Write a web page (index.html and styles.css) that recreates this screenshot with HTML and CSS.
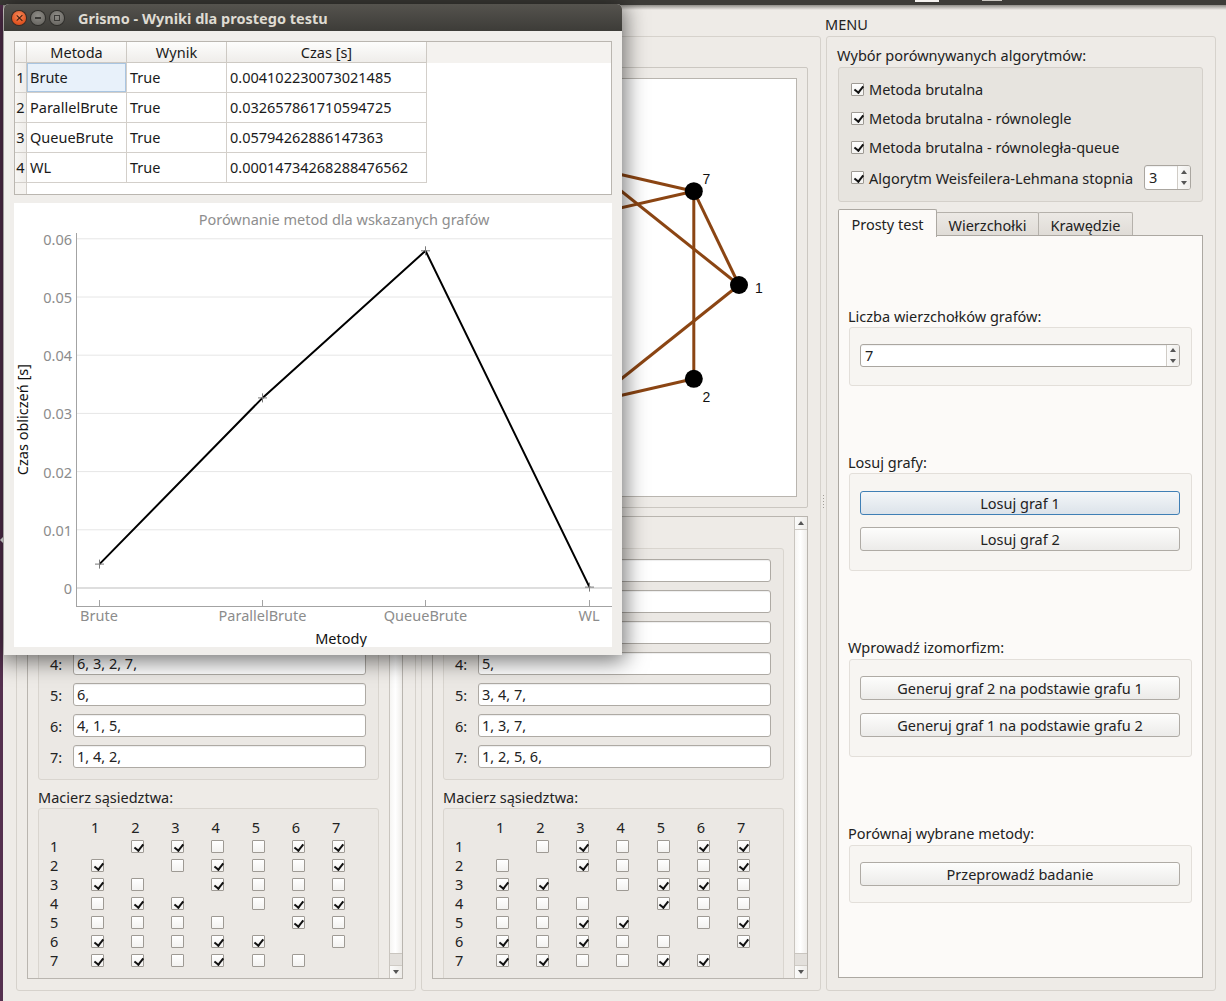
FILE: index.html
```html
<!DOCTYPE html>
<html lang="pl">
<head>
<meta charset="utf-8">
<title>Grismo</title>
<link rel="stylesheet" href="styles.css">
</head>
<body>
<div class="screen">
  <div class="topbar"><span class="tb-icon1"></span><span class="tb-icon2"></span></div>
  <div class="desk">
    <div class="launcher"><span class="launch-arrow"></span></div>
    <div class="mainwin">

      <!-- GRAF 1 (mostly covered by the dialog) -->
      <section class="col col-graph">
        <div class="col-title"></div>
        <div class="col-box">
          <div class="canvas-frame">
            <div class="canvas">
              <svg class="graph" width="352" height="417" viewBox="0 0 352 417">
                <g class="edges">
                  <line x1="295" y1="206" x2="249.8" y2="299.8"/>
                  <line x1="295" y1="206" x2="148.3" y2="323"/>
                  <line x1="295" y1="206" x2="148.3" y2="89"/>
                  <line x1="295" y1="206" x2="249.8" y2="112.2"/>
                  <line x1="249.8" y1="299.8" x2="66.9" y2="258.1"/>
                  <line x1="249.8" y1="299.8" x2="249.8" y2="112.2"/>
                  <line x1="148.3" y1="323" x2="66.9" y2="258.1"/>
                  <line x1="66.9" y1="258.1" x2="148.3" y2="89"/>
                  <line x1="66.9" y1="258.1" x2="249.8" y2="112.2"/>
                  <line x1="66.9" y1="153.9" x2="148.3" y2="89"/>
                </g>
                <g class="nodes">
                  <circle cx="295" cy="206" r="9"/><circle cx="249.8" cy="299.8" r="9"/>
                  <circle cx="148.3" cy="323" r="9"/><circle cx="66.9" cy="258.1" r="9"/>
                  <circle cx="66.9" cy="153.9" r="9"/><circle cx="148.3" cy="89" r="9"/>
                  <circle cx="249.8" cy="112.2" r="9"/>
                </g>
              </svg>
            </div>
          </div>
          <div class="scroll">
            <div class="scroll-content">
              <div class="sec-label"></div>
              <div class="group adj">
                <div class="adj-row"><span class="adj-lbl"></span><div class="input"></div></div>
                <div class="adj-row"><span class="adj-lbl"></span><div class="input"></div></div>
                <div class="adj-row"><span class="adj-lbl"></span><div class="input"></div></div>
                <div class="adj-row"><span class="adj-lbl">4:</span><div class="input">6, 3, 2, 7,</div></div>
                <div class="adj-row"><span class="adj-lbl">5:</span><div class="input">6,</div></div>
                <div class="adj-row"><span class="adj-lbl">6:</span><div class="input">4, 1, 5,</div></div>
                <div class="adj-row"><span class="adj-lbl">7:</span><div class="input">1, 4, 2,</div></div>
              </div>
              <div class="sec-label sec-label2">Macierz sąsiedztwa:</div>
              <div class="group matrix">
                <span></span><span>1</span><span>2</span><span>3</span><span>4</span><span>5</span><span>6</span><span>7</span>
                <span>1</span><span></span><span class="cb on"></span><span class="cb on"></span><span class="cb"></span><span class="cb"></span><span class="cb on"></span><span class="cb on"></span>
                <span>2</span><span class="cb on"></span><span></span><span class="cb"></span><span class="cb on"></span><span class="cb"></span><span class="cb"></span><span class="cb on"></span>
                <span>3</span><span class="cb on"></span><span class="cb"></span><span></span><span class="cb on"></span><span class="cb"></span><span class="cb"></span><span class="cb"></span>
                <span>4</span><span class="cb"></span><span class="cb on"></span><span class="cb on"></span><span></span><span class="cb"></span><span class="cb on"></span><span class="cb on"></span>
                <span>5</span><span class="cb"></span><span class="cb"></span><span class="cb"></span><span class="cb"></span><span></span><span class="cb on"></span><span class="cb"></span>
                <span>6</span><span class="cb on"></span><span class="cb"></span><span class="cb"></span><span class="cb on"></span><span class="cb on"></span><span></span><span class="cb"></span>
                <span>7</span><span class="cb on"></span><span class="cb on"></span><span class="cb"></span><span class="cb on"></span><span class="cb"></span><span class="cb"></span><span></span>
              </div>
            </div>
            <div class="vscroll">
              <div class="sb-btn sb-up"><span class="tri-up"></span></div>
              <div class="sb-handle"></div>
              <div class="sb-trough"></div>
              <div class="sb-btn sb-down"><span class="tri-down"></span></div>
            </div>
          </div>
        </div>
      </section>

      <div class="splitter"></div>

      <!-- GRAF 2 -->
      <section class="col col-graph">
        <div class="col-title"></div>
        <div class="col-box">
          <div class="canvas-frame">
            <div class="canvas">
              <svg class="graph" width="352" height="417" viewBox="0 0 352 417">
                <g class="edges">
                  <line x1="295" y1="206" x2="148.3" y2="323"/>
                  <line x1="295" y1="206" x2="148.3" y2="89"/>
                  <line x1="295" y1="206" x2="249.8" y2="112.2"/>
                  <line x1="249.8" y1="299.8" x2="148.3" y2="323"/>
                  <line x1="249.8" y1="299.8" x2="249.8" y2="112.2"/>
                  <line x1="148.3" y1="323" x2="66.9" y2="153.9"/>
                  <line x1="148.3" y1="323" x2="148.3" y2="89"/>
                  <line x1="66.9" y1="258.1" x2="66.9" y2="153.9"/>
                  <line x1="66.9" y1="153.9" x2="249.8" y2="112.2"/>
                  <line x1="148.3" y1="89" x2="249.8" y2="112.2"/>
                </g>
                <g class="nodes">
                  <circle cx="295" cy="206" r="9"/><circle cx="249.8" cy="299.8" r="9"/>
                  <circle cx="148.3" cy="323" r="9"/><circle cx="66.9" cy="258.1" r="9"/>
                  <circle cx="66.9" cy="153.9" r="9"/><circle cx="148.3" cy="89" r="9"/>
                  <circle cx="249.8" cy="112.2" r="9"/>
                </g>
                <g class="nlabels">
                  <text x="315" y="209">1</text><text x="262.3" y="318.4">2</text>
                  <text x="262.3" y="99.6">7</text>
                </g>
              </svg>
            </div>
          </div>
          <div class="scroll">
            <div class="scroll-content">
              <div class="sec-label"></div>
              <div class="group adj">
                <div class="adj-row"><span class="adj-lbl"></span><div class="input"></div></div>
                <div class="adj-row"><span class="adj-lbl"></span><div class="input"></div></div>
                <div class="adj-row"><span class="adj-lbl"></span><div class="input"></div></div>
                <div class="adj-row"><span class="adj-lbl">4:</span><div class="input">5,</div></div>
                <div class="adj-row"><span class="adj-lbl">5:</span><div class="input">3, 4, 7,</div></div>
                <div class="adj-row"><span class="adj-lbl">6:</span><div class="input">1, 3, 7,</div></div>
                <div class="adj-row"><span class="adj-lbl">7:</span><div class="input">1, 2, 5, 6,</div></div>
              </div>
              <div class="sec-label sec-label2">Macierz sąsiedztwa:</div>
              <div class="group matrix">
                <span></span><span>1</span><span>2</span><span>3</span><span>4</span><span>5</span><span>6</span><span>7</span>
                <span>1</span><span></span><span class="cb"></span><span class="cb on"></span><span class="cb"></span><span class="cb"></span><span class="cb on"></span><span class="cb on"></span>
                <span>2</span><span class="cb"></span><span></span><span class="cb on"></span><span class="cb"></span><span class="cb"></span><span class="cb"></span><span class="cb on"></span>
                <span>3</span><span class="cb on"></span><span class="cb on"></span><span></span><span class="cb"></span><span class="cb on"></span><span class="cb on"></span><span class="cb"></span>
                <span>4</span><span class="cb"></span><span class="cb"></span><span class="cb"></span><span></span><span class="cb on"></span><span class="cb"></span><span class="cb"></span>
                <span>5</span><span class="cb"></span><span class="cb"></span><span class="cb on"></span><span class="cb on"></span><span></span><span class="cb"></span><span class="cb on"></span>
                <span>6</span><span class="cb on"></span><span class="cb"></span><span class="cb on"></span><span class="cb"></span><span class="cb"></span><span></span><span class="cb on"></span>
                <span>7</span><span class="cb on"></span><span class="cb on"></span><span class="cb"></span><span class="cb"></span><span class="cb on"></span><span class="cb on"></span><span></span>
              </div>
            </div>
            <div class="vscroll">
              <div class="sb-btn sb-up"><span class="tri-up"></span></div>
              <div class="sb-handle"></div>
              <div class="sb-trough"></div>
              <div class="sb-btn sb-down"><span class="tri-down"></span></div>
            </div>
          </div>
        </div>
      </section>

      <div class="splitter"><span class="grip"></span></div>

      <!-- MENU -->
      <section class="col col-menu">
        <div class="col-title">MENU</div>
        <div class="col-box menu-box">
          <div class="menu-label">Wybór porównywanych algorytmów:</div>
          <div class="algo-group">
            <div class="algo-row"><span class="cb on"></span><span>Metoda brutalna</span></div>
            <div class="algo-row"><span class="cb on"></span><span>Metoda brutalna - równolegle</span></div>
            <div class="algo-row"><span class="cb on"></span><span>Metoda brutalna - równoległa-queue</span></div>
            <div class="algo-row algo-row4"><span class="cb on"></span><span>Algorytm Weisfeilera-Lehmana stopnia</span>
              <div class="spin spin-small"><span class="spin-val">3</span><span class="spin-arrows"><span class="sa"><span class="tri-up"></span></span><span class="sa"><span class="tri-down"></span></span></span></div>
            </div>
          </div>
          <div class="tabs">
            <div class="tab tab-active">Prosty test</div>
            <div class="tab tab-2">Wierzchołki</div>
            <div class="tab tab-3">Krawędzie</div>
          </div>
          <div class="pane">
            <div class="pane-label pl-first">Liczba wierzchołków grafów:</div>
            <div class="pgroup pg-spin">
              <div class="spin spin-big"><span class="spin-val">7</span><span class="spin-arrows"><span class="sa"><span class="tri-up"></span></span><span class="sa"><span class="tri-down"></span></span></span></div>
            </div>
            <div class="pane-label">Losuj grafy:</div>
            <div class="pgroup pg-rand">
              <div class="btn btn-focus">Losuj graf 1</div>
              <div class="btn">Losuj graf 2</div>
            </div>
            <div class="pane-label pl-iso">Wprowadź izomorfizm:</div>
            <div class="pgroup pg-iso">
              <div class="btn">Generuj graf 2 na podstawie grafu 1</div>
              <div class="btn">Generuj graf 1 na podstawie grafu 2</div>
            </div>
            <div class="pane-label pl-iso">Porównaj wybrane metody:</div>
            <div class="pgroup pg-run">
              <div class="btn">Przeprowadź badanie</div>
            </div>
          </div>
        </div>
      </section>
    </div>
  </div>
</div>

<!-- Dialog window -->
<div class="dlg">
  <div class="dlg-title">
    <span class="wbtn wclose"><span class="wx"></span></span>
    <span class="wbtn wmin"><span class="wmin-bar"></span></span>
    <span class="wbtn wmax"><span class="wmax-box"></span></span>
    <span class="dlg-title-text">Grismo - Wyniki dla prostego testu</span>
  </div>
  <div class="dlg-body">
    <div class="tbl">
      <div class="th corner"></div><div class="th">Metoda</div><div class="th">Wynik</div><div class="th">Czas [s]</div><div class="th-rest"></div>
      <div class="rh">1</div><div class="td td-sel">Brute</div><div class="td">True</div><div class="td">0.004102230073021485</div><div class="td-rest"></div>
      <div class="rh">2</div><div class="td">ParallelBrute</div><div class="td">True</div><div class="td">0.032657861710594725</div><div class="td-rest"></div>
      <div class="rh">3</div><div class="td">QueueBrute</div><div class="td">True</div><div class="td">0.05794262886147363</div><div class="td-rest"></div>
      <div class="rh">4</div><div class="td">WL</div><div class="td">True</div><div class="td">0.00014734268288476562</div><div class="td-rest"></div>
      <div class="rh-fill"></div><div class="fill"></div><div class="fill"></div><div class="fill"></div><div class="fill"></div>
    </div>
    <div class="chart">
      <svg class="chart-svg" width="598" height="444" viewBox="0 0 598 444">
        <text class="c-title" x="330" y="16">Porównanie metod dla wskazanych grafów</text>
        <g class="grid">
          <line x1="62" y1="35.8" x2="598" y2="35.8"/>
          <line x1="62" y1="94" x2="598" y2="94"/>
          <line x1="62" y1="152.2" x2="598" y2="152.2"/>
          <line x1="62" y1="210.4" x2="598" y2="210.4"/>
          <line x1="62" y1="268.6" x2="598" y2="268.6"/>
          <line x1="62" y1="326.8" x2="598" y2="326.8"/>
        </g>
        <line class="zero" x1="62" y1="385" x2="598" y2="385"/>
        <g class="axis">
          <line x1="62.5" y1="30" x2="62.5" y2="403"/>
          <line x1="62" y1="403.5" x2="598" y2="403.5"/>
          <line x1="85.5" y1="397" x2="85.5" y2="403"/>
          <line x1="248.5" y1="397" x2="248.5" y2="403"/>
          <line x1="411.5" y1="397" x2="411.5" y2="403"/>
          <line x1="575.5" y1="397" x2="575.5" y2="403"/>
        </g>
        <g class="ylab">
          <text x="58" y="35.8">0.06</text>
          <text x="58" y="94">0.05</text>
          <text x="58" y="152.2">0.04</text>
          <text x="58" y="210.4">0.03</text>
          <text x="58" y="268.6">0.02</text>
          <text x="58" y="326.8">0.01</text>
          <text x="58" y="385">0</text>
        </g>
        <g class="xlab">
          <text x="85" y="412">Brute</text>
          <text x="248.5" y="412">ParallelBrute</text>
          <text x="411.5" y="412">QueueBrute</text>
          <text x="575" y="412">WL</text>
        </g>
        <polyline class="series" points="85.5,361.1 248.5,194.9 411.5,47.8 575.5,384.1"/>
        <g class="marks">
          <path d="M81 361.1h9M85.5 356.6v9"/>
          <path d="M244 194.9h9M248.5 190.4v9"/>
          <path d="M407 47.8h9M411.5 43.3v9"/>
          <path d="M571 384.1h9M575.5 379.6v9"/>
        </g>
        <text class="c-axis" x="327" y="435">Metody</text>
      </svg>
      <div class="y-title"><span>Czas obliczeń [s]</span></div>
    </div>
  </div>
</div>
</body>
</html>
```

FILE: styles.css
```css
* { box-sizing: border-box; }
html, body { margin: 0; padding: 0; }
body {
  width: 1226px; height: 1001px; overflow: hidden; position: relative;
  background: #55304f;
  font-family: "Noto Sans", "DejaVu Sans", sans-serif;
  font-size: 14.5px; color: #222;
}
.screen { display: flex; flex-direction: column; height: 1001px; }
.topbar { height: 5px; flex: none; background: #3d3c38; display: flex; align-items: flex-start; }
.tb-icon1 { margin-left: 915px; width: 24px; height: 2px; background: #f4f2ef; }
.tb-icon2 { margin-left: 43px; width: 20px; height: 1px; background: #c9c6c0; }
.desk { flex: 1; display: flex; min-height: 0; }
.launcher { width: 3px; flex: none; background: #55304f; }
.launch-arrow {
  display: block; margin-top: 532px; width: 0; height: 0;
  border-top: 3px solid transparent; border-bottom: 3px solid transparent;
  border-right: 3px solid #fff;
}
.mainwin {
  flex: 1; display: flex; padding: 9px 10px 10px 13px;
  background: linear-gradient(#8f8d88, #eeebe7 5px);
  background-color: #eeebe7;
}
.col { display: flex; flex-direction: column; flex: none; }
.col-graph { width: 400px; }
.col-menu { width: 390px; }
.splitter { width: 5px; flex: none; display: flex; align-items: center; justify-content: center; }
.grip { width: 1px; height: 15px; background: repeating-linear-gradient(#a19d97 0 1px, transparent 1px 3px); }
.col-title { height: 22px; line-height: 20px; color: #222; }
.col-menu .col-title { margin-left: -1px; }
.col-box {
  flex: 1; border: 1px solid #d6d2cc; border-radius: 3px;
  padding: 30px 12px 11px 10px; display: flex; flex-direction: column; gap: 8px; min-height: 0;
}

/* graph canvas */
.canvas-frame { height: 441px; flex: none; border: 1px solid #cbc7c1; border-radius: 2px; padding: 10px; }
.canvas { height: 100%; background: #fff; border: 1px solid #b9b5af; overflow: hidden; }
.graph { display: block; }
.edges line { stroke: #8b4513; stroke-width: 3; }
.nodes circle { fill: #000; }
.nlabels text { font-family: "Liberation Sans", Arial, sans-serif; font-size: 14px; fill: #111; text-anchor: middle; dominant-baseline: central; }

/* scroll area */
.scroll { flex: 1; min-height: 0; border: 1px solid #b9b5af; display: flex; overflow: hidden; }
.scroll-content { flex: 1; overflow: hidden; padding: 10px; }
.sec-label { height: 20px; line-height: 20px; margin-bottom: 1px; }
.sec-label2 { margin-top: 7px; }
.group { border: 1px solid #d9d5cf; border-radius: 3px; background: #ebe8e4; }
.adj { padding: 10px 12px 11px 11px; display: flex; flex-direction: column; gap: 8px; }
.adj-row { display: flex; align-items: center; height: 23px; }
.adj-lbl { width: 23px; flex: none; }
.input {
  flex: 1; height: 23px; background: #fff; border: 1px solid #aeaaa4; border-radius: 3px;
  padding-left: 3px; line-height: 21px; box-shadow: inset 0 1px 1px rgba(0,0,0,0.07);
  white-space: nowrap;
}
.matrix {
  display: grid; grid-template-columns: 41px repeat(7, 40.17px); grid-auto-rows: 19px;
  align-items: center; padding: 9px 10px 10px 11px; line-height: 19px;
}
.matrix > span { justify-self: start; }

.cb {
  display: block; width: 13px; height: 13px; flex: none; position: relative;
  border: 1px solid #9e9a94; border-radius: 1px;
  background: linear-gradient(#ffffff, #f3f2f0);
}
.cb.on::after {
  content: ""; position: absolute; left: 3.5px; top: 0.5px; width: 3.5px; height: 7px;
  border: solid #111; border-width: 0 2px 2.5px 0; transform: rotate(38deg);
}

.vscroll { width: 13px; flex: none; border-left: 1px solid #c9c5bf; display: flex; flex-direction: column; background: #e5e2de; }
.sb-btn { height: 13px; flex: none; display: flex; align-items: center; justify-content: center; background: linear-gradient(90deg, #fbfbfa, #eeece9); }
.sb-up { border-bottom: 1px solid #cfcbc5; }
.sb-down { border-top: 1px solid #cfcbc5; }
.sb-handle { flex: 1; background: linear-gradient(90deg, #f6f5f3, #ffffff 45%, #efedea); border-bottom: 1px solid #c9c5bf; }
.sb-trough { height: 11px; flex: none; background: #e3e0dc; }
.tri-up { width: 0; height: 0; border-left: 3.5px solid transparent; border-right: 3.5px solid transparent; border-bottom: 4px solid #555; }
.tri-down { width: 0; height: 0; border-left: 3.5px solid transparent; border-right: 3.5px solid transparent; border-top: 4px solid #555; }

/* menu */
.menu-box { padding: 8px 12px 12px 11px; gap: 0; }
.menu-label { height: 20px; line-height: 20px; margin-bottom: 2px; margin-left: -1px; }
.algo-group {
  border: 1px solid #d4d0ca; border-radius: 3px; background: #e7e4df;
  padding: 11px 11px 11px 11px; display: flex; flex-direction: column; gap: 9px;
}
.algo-row { height: 20px; display: flex; align-items: center; gap: 5px; white-space: nowrap; }
.algo-row .cb { margin-left: 1px; }
.algo-row4 { height: 25px; margin-top: -1px; }
.spin {
  display: flex; background: #fff; border: 1px solid #aaa6a0; border-radius: 3px;
  box-shadow: inset 0 1px 1px rgba(0,0,0,0.06);
}
.spin-val { flex: 1; padding-left: 4px; line-height: 21px; }
.spin-small { margin-left: auto; width: 47px; height: 25px; }
.spin-small .spin-val { line-height: 23px; }
.spin-arrows { width: 13px; flex: none; display: flex; flex-direction: column; border-left: 1px solid #d0ccc6; background: linear-gradient(90deg, #fbfbfa, #efedea); border-radius: 0 2px 2px 0; }
.sa { flex: 1; display: flex; align-items: center; justify-content: center; }
.spin-big { height: 23px; }

.tabs { margin-top: 6px; height: 28px; display: flex; align-items: flex-end; flex: none; }
.tab {
  height: 24px; padding-top: 2px; line-height: 20px; text-align: center;
  border: 1px solid #b5b1ab; border-bottom: none; border-radius: 2px 2px 0 0;
  background: linear-gradient(#ece9e5, #dfdbd6);
}
.tab-active {
  width: 99px; height: 28px; padding-top: 4px; margin-bottom: -1px;
  background: #fcfaf8; border-color: #aca8a2; position: relative; z-index: 1;
}
.tab-2 { width: 103px; margin-left: -1px; }
.tab-3 { width: 95px; margin-left: -1px; }
.pane {
  flex: 1; margin-top: -1px; border: 1px solid #aca8a2; background: #fcfaf8;
  padding: 0 10px 0 9px; display: flex; flex-direction: column;
}
.pane-label { height: 20px; line-height: 20px; margin-top: 66px; margin-bottom: 1px; }
.pl-first { margin-top: 70px; }
.pl-iso { margin-bottom: 2px; }
.pgroup {
  margin-left: 1px; border: 1px solid #e3dfda; border-radius: 3px; background: #f7f5f2;
  display: flex; flex-direction: column;
}
.pg-spin { padding: 16px 11px 18px 10px; }
.pg-rand { padding: 17px 11px 19px 10px; gap: 12px; }
.pg-iso { padding: 16px 11px 19px 10px; gap: 13px; }
.pg-run { padding: 16px 11px 16px 10px; }
.btn {
  height: 24px; line-height: 22px; text-align: center;
  border: 1px solid #afaba5; border-radius: 3px;
  background: linear-gradient(#fdfdfc, #ecebe9);
}
.btn-focus { border-color: #3f7fb5; background: linear-gradient(#f3f6f8, #dce3ea); }

/* dialog */
.dlg {
  position: absolute; left: 4px; top: 4px; width: 618px; height: 651px;
  background: #f0eeeb; border-radius: 5px 5px 0 0;
  box-shadow: 0 3px 22px 3px rgba(0,0,0,0.55);
  display: flex; flex-direction: column; z-index: 10;
}
.dlg-title {
  height: 27px; flex: none; display: flex; align-items: center; padding-left: 8px; gap: 5px;
  background: linear-gradient(#55534e, #3d3c38); border-radius: 5px 5px 0 0;
}
.wbtn {
  width: 14px; height: 14px; border-radius: 50%; flex: none; position: relative;
  display: flex; align-items: center; justify-content: center;
}
.wclose {
  background: radial-gradient(circle at 50% 35%, #f68a5c, #e0521f 70%, #c7441a);
  box-shadow: 0 0 0 1px #3a2a22;
}
.wx { width: 7px; height: 7px; position: relative; }
.wx::before, .wx::after {
  content: ""; position: absolute; left: 3px; top: -0.5px; width: 1.3px; height: 8px;
  background: #3b1d10; transform: rotate(45deg);
}
.wx::after { transform: rotate(-45deg); }
.wmin, .wmax {
  background: radial-gradient(circle at 50% 35%, #8f8d88, #6e6c67 70%, #5e5c58);
  box-shadow: 0 0 0 1px #2e2d2a;
}
.wmin-bar { width: 6px; height: 2px; background: #3b3a37; }
.wmax-box { width: 6px; height: 6px; border: 1px solid #3b3a37; }
.dlg-title-text { margin-left: 9px; color: #dfdbd2; font-weight: bold; font-size: 14.5px; white-space: nowrap; }
.dlg-body { flex: 1; padding: 10px 10px 8px 10px; display: flex; flex-direction: column; gap: 8px; min-height: 0; }

.tbl {
  height: 154px; flex: none; border: 1px solid #bab6b0; background: #fff;
  display: grid; grid-template-columns: 12px 100px 100px 200px 1fr;
  grid-template-rows: 21px 30px 30px 30px 30px 1fr;
  color: #1a1a1a;
}
.th {
  background: linear-gradient(#fdfdfc, #efedea);
  border-right: 1px solid #cdc9c3; border-bottom: 1px solid #cdc9c3;
  text-align: center; line-height: 20px;
}
.th-rest { background: #f4f2ef; }
.rh {
  background: linear-gradient(90deg, #f7f6f4, #efedea);
  border-right: 1px solid #cdc9c3; border-bottom: 1px solid #d3cfca;
  text-align: center; line-height: 28px;
}
.rh-fill { background: #f4f2ef; border-right: 1px solid #d3cfca; }
.td { border-right: 1px solid #d3cfca; border-bottom: 1px solid #d3cfca; padding-left: 3px; line-height: 28px; white-space: nowrap; }
.td-sel { background: #e8f1fa; box-shadow: inset 0 0 0 1px #a9c5e1; }
.td-rest, .fill { background: #fff; }

.chart { flex: 1; background: #fff; min-height: 0; display: grid; grid-template: 1fr / 1fr; }
.chart-svg { grid-area: 1 / 1; display: block; font-family: "Noto Sans", "DejaVu Sans", sans-serif; font-size: 14.5px; }
.y-title {
  grid-area: 1 / 1; justify-self: start; align-self: center;
  width: 16px; margin-bottom: 10px; display: flex; justify-content: center;
}
.y-title span {
  writing-mode: vertical-rl; transform: rotate(180deg);
  color: #111; line-height: 16px; white-space: nowrap;
}
.c-title { fill: #8e8e8e; text-anchor: middle; dominant-baseline: central; }
.grid line { stroke: #e6e6e6; stroke-width: 1; }
.zero { stroke: #bdbdbd; stroke-width: 1; }
.axis line { stroke: #a3a3a3; stroke-width: 1; }
.ylab text { fill: #8c8c8c; text-anchor: end; dominant-baseline: central; }
.xlab text { fill: #8c8c8c; text-anchor: middle; dominant-baseline: central; }
.series { fill: none; stroke: #000; stroke-width: 2; stroke-linejoin: round; }
.marks path { stroke: #7a7a7a; stroke-width: 1; fill: none; }
.c-axis { fill: #111; text-anchor: middle; dominant-baseline: central; }
```
